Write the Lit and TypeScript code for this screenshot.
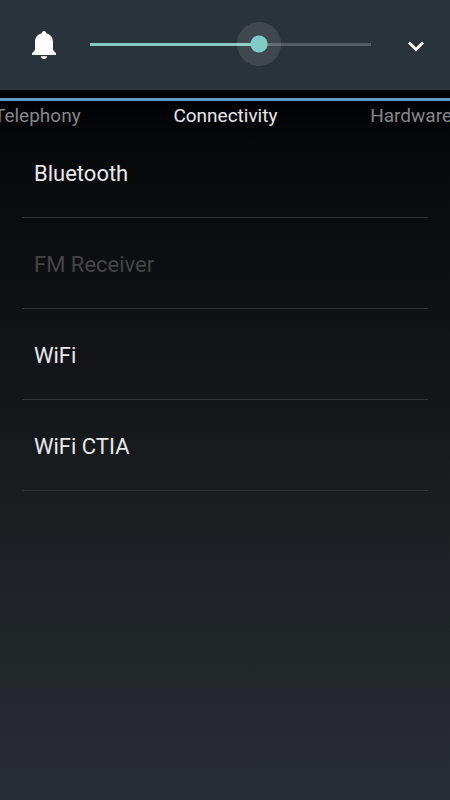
import { LitElement, html, css } from "lit";
import { customElement, state } from "lit/decorators.js";
import { styleMap } from "lit/directives/style-map.js";

@customElement("volume-panel")
class VolumePanel extends LitElement {
  @state() private level = 60;

  static styles = css`
    :host {
      display: block;
      background: #29333a;
    }
    .panel {
      display: flex;
      align-items: center;
      height: 90px;
      box-sizing: border-box;
      padding: 0 16px 0 24px;
    }
    button {
      display: flex;
      align-items: center;
      justify-content: center;
      width: 40px;
      height: 40px;
      padding: 0;
      border: 0;
      background: none;
      color: #fff;
    }
    .expand {
      width: 36px;
      height: 36px;
    }
    .slider {
      flex: 1;
      min-width: 0;
      height: 44px;
      margin: 0 5px 2px 4px;
      appearance: none;
      -webkit-appearance: none;
      background: none;
      outline: none;
    }
    .slider::-webkit-slider-runnable-track {
      height: 44px;
      background:
        linear-gradient(#88c8c0, #88c8c0) 22px center /
          calc((100% - 44px) * var(--level)) 3px no-repeat,
        linear-gradient(#545d63, #545d63) 22px center /
          calc(100% - 44px) 3px no-repeat;
    }
    .slider::-webkit-slider-thumb {
      appearance: none;
      -webkit-appearance: none;
      width: 44px;
      height: 44px;
      border-radius: 50%;
      background: radial-gradient(
        circle,
        #80cbc4 8px,
        rgba(255, 255, 255, 0.1) 9px
      );
    }
  `;

  render() {
    return html`
      <div class="panel">
        <button aria-label="Mute ringer">
          <svg width="26" height="30" viewBox="0 0 26 30" fill="currentColor">
            <path
              d="M13 1c-1.300 0-2.200 1-2.200 2.300C6.500 4.200 4 7.700 4 12v8l-3 3.200V25h24v-1.800L22 20v-8c0-4.300-2.500-7.800-6.800-8.700C15.200 2 14.300 1 13 1z"
            />
            <path d="M9.800 26.200h6.400c-.3 1.700-1.600 2.800-3.200 2.800s-2.900-1.100-3.200-2.800z" />
          </svg>
        </button>
        <input
          class="slider"
          type="range"
          min="0"
          max="100"
          aria-label="Ringer volume"
          .value=${String(this.level)}
          style=${styleMap({ "--level": String(this.level / 100) })}
          @input=${(e: Event) =>
            (this.level = Number((e.target as HTMLInputElement).value))}
        />
        <button class="expand" aria-label="Expand">
          <svg width="20" height="20" viewBox="0 0 20 20" fill="none">
            <path
              d="M3 7.500l7 7 7-7"
              stroke="currentColor"
              stroke-width="2.800"
            />
          </svg>
        </button>
      </div>
    `;
  }
}

@customElement("app-root")
class AppRoot extends LitElement {
  @state() private tab = "Connectivity";

  private tabs = ["Telephony", "Connectivity", "Hardware"];
  private items = [
    { label: "Bluetooth", enabled: true },
    { label: "FM Receiver", enabled: false },
    { label: "WiFi", enabled: true },
    { label: "WiFi CTIA", enabled: true },
  ];

  static styles = css`
    :host {
      display: flex;
      flex-direction: column;
      min-height: 100vh;
      font-family: Roboto, sans-serif;
      background: linear-gradient(
        #000 11%,
        #030406 14%,
        #08090b 20%,
        #101114 39%,
        #14171a 50%,
        #1b1e20 62%,
        #202328 75%,
        #202528 78%,
        #23282a 85%,
        #242730 87%,
        #282c34 97%
      );
    }
    button {
      border: 0;
      background: none;
      font: inherit;
    }
    .tabs {
      display: flex;
      justify-content: space-between;
      height: 29px;
      margin-top: 8px;
      border-top: 3px solid #5ba0c2;
      box-sizing: border-box;
      overflow: hidden;
    }
    .tab {
      flex: none;
      height: 30px;
      margin: 0 -2px 0 -6px;
      padding: 0;
      color: #85868a;
      font-size: 19px;
      line-height: 30px;
    }
    .tab.active {
      color: #e8e8ea;
    }
    .list {
      margin: 0;
      padding: 0 22px;
      list-style: none;
    }
    .row {
      border-bottom: 1px solid #303335;
    }
    .item {
      display: block;
      width: 100%;
      height: 90px;
      padding: 4px 12px 0;
      text-align: left;
      font-size: 22px;
      line-height: 28px;
      color: #e8e9eb;
    }
    .item:disabled {
      color: #434446;
    }
  `;

  render() {
    return html`
      <volume-panel></volume-panel>
      <nav class="tabs">
        ${this.tabs.map(
          (t) => html`<button
            class="tab ${t === this.tab ? "active" : ""}"
            @click=${() => (this.tab = t)}
          >${t}</button>`
        )}
      </nav>
      <ul class="list">
        ${this.items.map(
          (i) => html`<li class="row">
            <button class="item" ?disabled=${!i.enabled}>${i.label}</button>
          </li>`
        )}
      </ul>
    `;
  }
}
